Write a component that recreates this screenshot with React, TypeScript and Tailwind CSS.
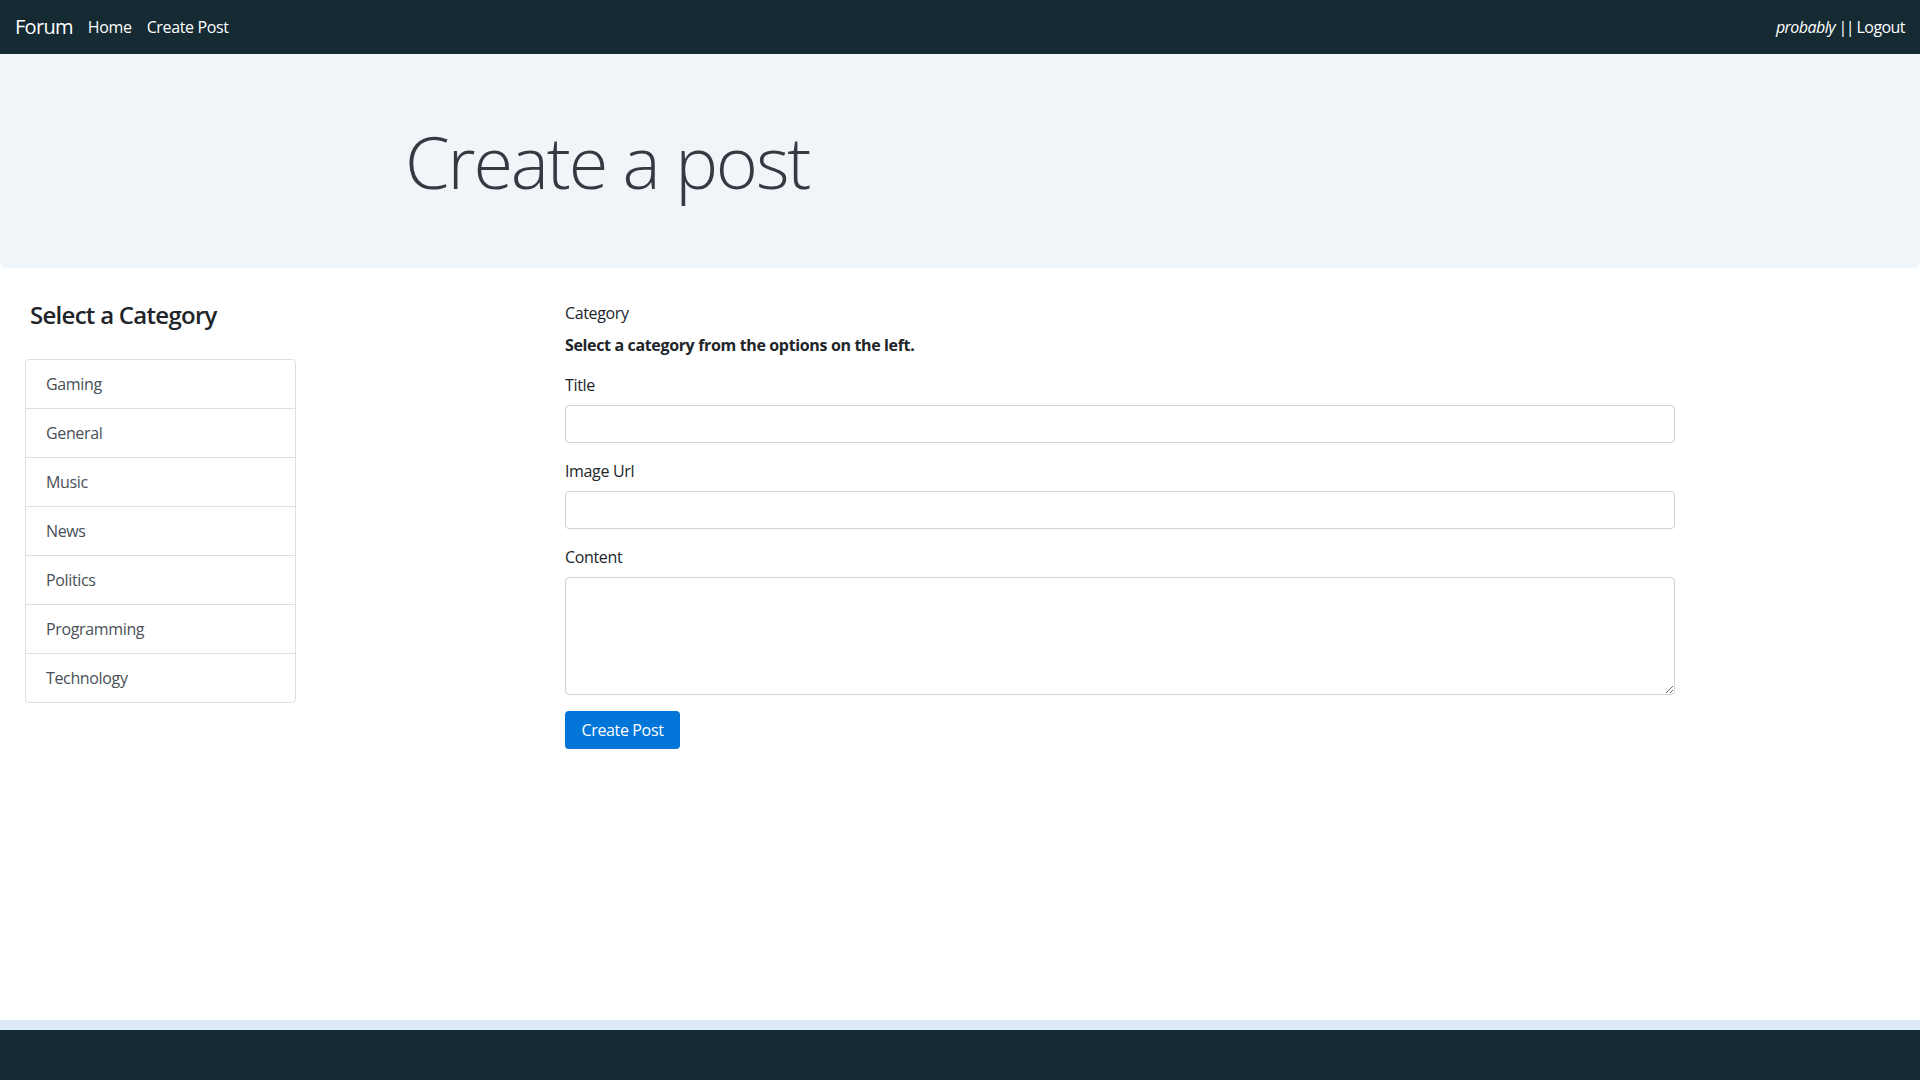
import React from "react";

const cats = ["Gaming", "General", "Music", "News", "Politics", "Programming", "Technology"];

export default function App() {
  return (
    <div className="min-h-screen flex flex-col bg-white text-[#212529] [font-family:'Open_Sans',sans-serif] text-[16px] tracking-[-0.022em]">
      <nav className="h-[54px] bg-[#152a33] flex items-center justify-between px-[15px] text-white shrink-0">
        <div className="flex items-center">
          <a className="text-[20px] leading-[30px] mr-[15px] tracking-[-0.035em]">Forum</a>
          <a className="leading-[24px]">Home</a>
          <a className="leading-[24px] ml-[15px]">Create Post</a>
        </div>
        <div className="leading-[24px] tracking-[-0.035em]">
          <i>probably</i> <span className="tracking-[-0.1em]">||</span> Logout
        </div>
      </nav>

      <header className="h-[214px] bg-[#f0f5fa] rounded-b-[6px] flex items-center shrink-0">
        <div className="w-[1140px] mx-auto px-[15px]">
          <h1 className="text-[72px] font-light leading-[1.2] text-[#343a40] tracking-[-0.03em]">Create a post</h1>
        </div>
      </header>

      <main className="flex mt-[33px]">
        <aside className="pl-[25px] w-[296px] shrink-0">
          <h4 className="pl-[5px] text-[24px] font-semibold leading-[1.2] mb-[29px] tracking-[-0.03em]">Select a Category</h4>
          <ul className="border border-[#dfdfdf] rounded-[4px]">
            {cats.map((c, i) => (
              <li
                key={c}
                className={`box-content h-[48px] flex items-center px-[20px] text-[#495057] ${i > 0 ? "border-t border-[#dfdfdf]" : ""}`}
              >
                {c}
              </li>
            ))}
          </ul>
        </aside>

        <form className="ml-[269px] w-[1110px]">
          <div className="mb-[16px]">
            <label className="block leading-[24px] mb-[8px]">Category</label>
            <div className="font-bold leading-[24px]">Select a category from the options on the left.</div>
          </div>
          <div className="mb-[16px]">
            <label className="block leading-[24px] mb-[8px]">Title</label>
            <input className="block w-full h-[38px] border border-[#ced4da] rounded-[4px] px-[12px]" />
          </div>
          <div className="mb-[16px]">
            <label className="block leading-[24px] mb-[8px]">Image Url</label>
            <input className="block w-full h-[38px] border border-[#ced4da] rounded-[4px] px-[12px]" />
          </div>
          <div className="mb-[16px]">
            <label className="block leading-[24px] mb-[8px]">Content</label>
            <textarea className="block w-full h-[118px] border border-[#ced4da] rounded-[4px] px-[12px] py-[6px]" />
          </div>
          <button type="button" className="w-[115px] h-[38px] rounded-[4px] bg-[#0275d8] text-white leading-[24px] text-center">
            Create Post
          </button>
        </form>
      </main>

      <footer className="mt-auto shrink-0">
        <div className="h-[10px] bg-[#dde9f9]" />
        <div className="h-[50px] bg-[#152a33]" />
      </footer>
    </div>
  );
}
